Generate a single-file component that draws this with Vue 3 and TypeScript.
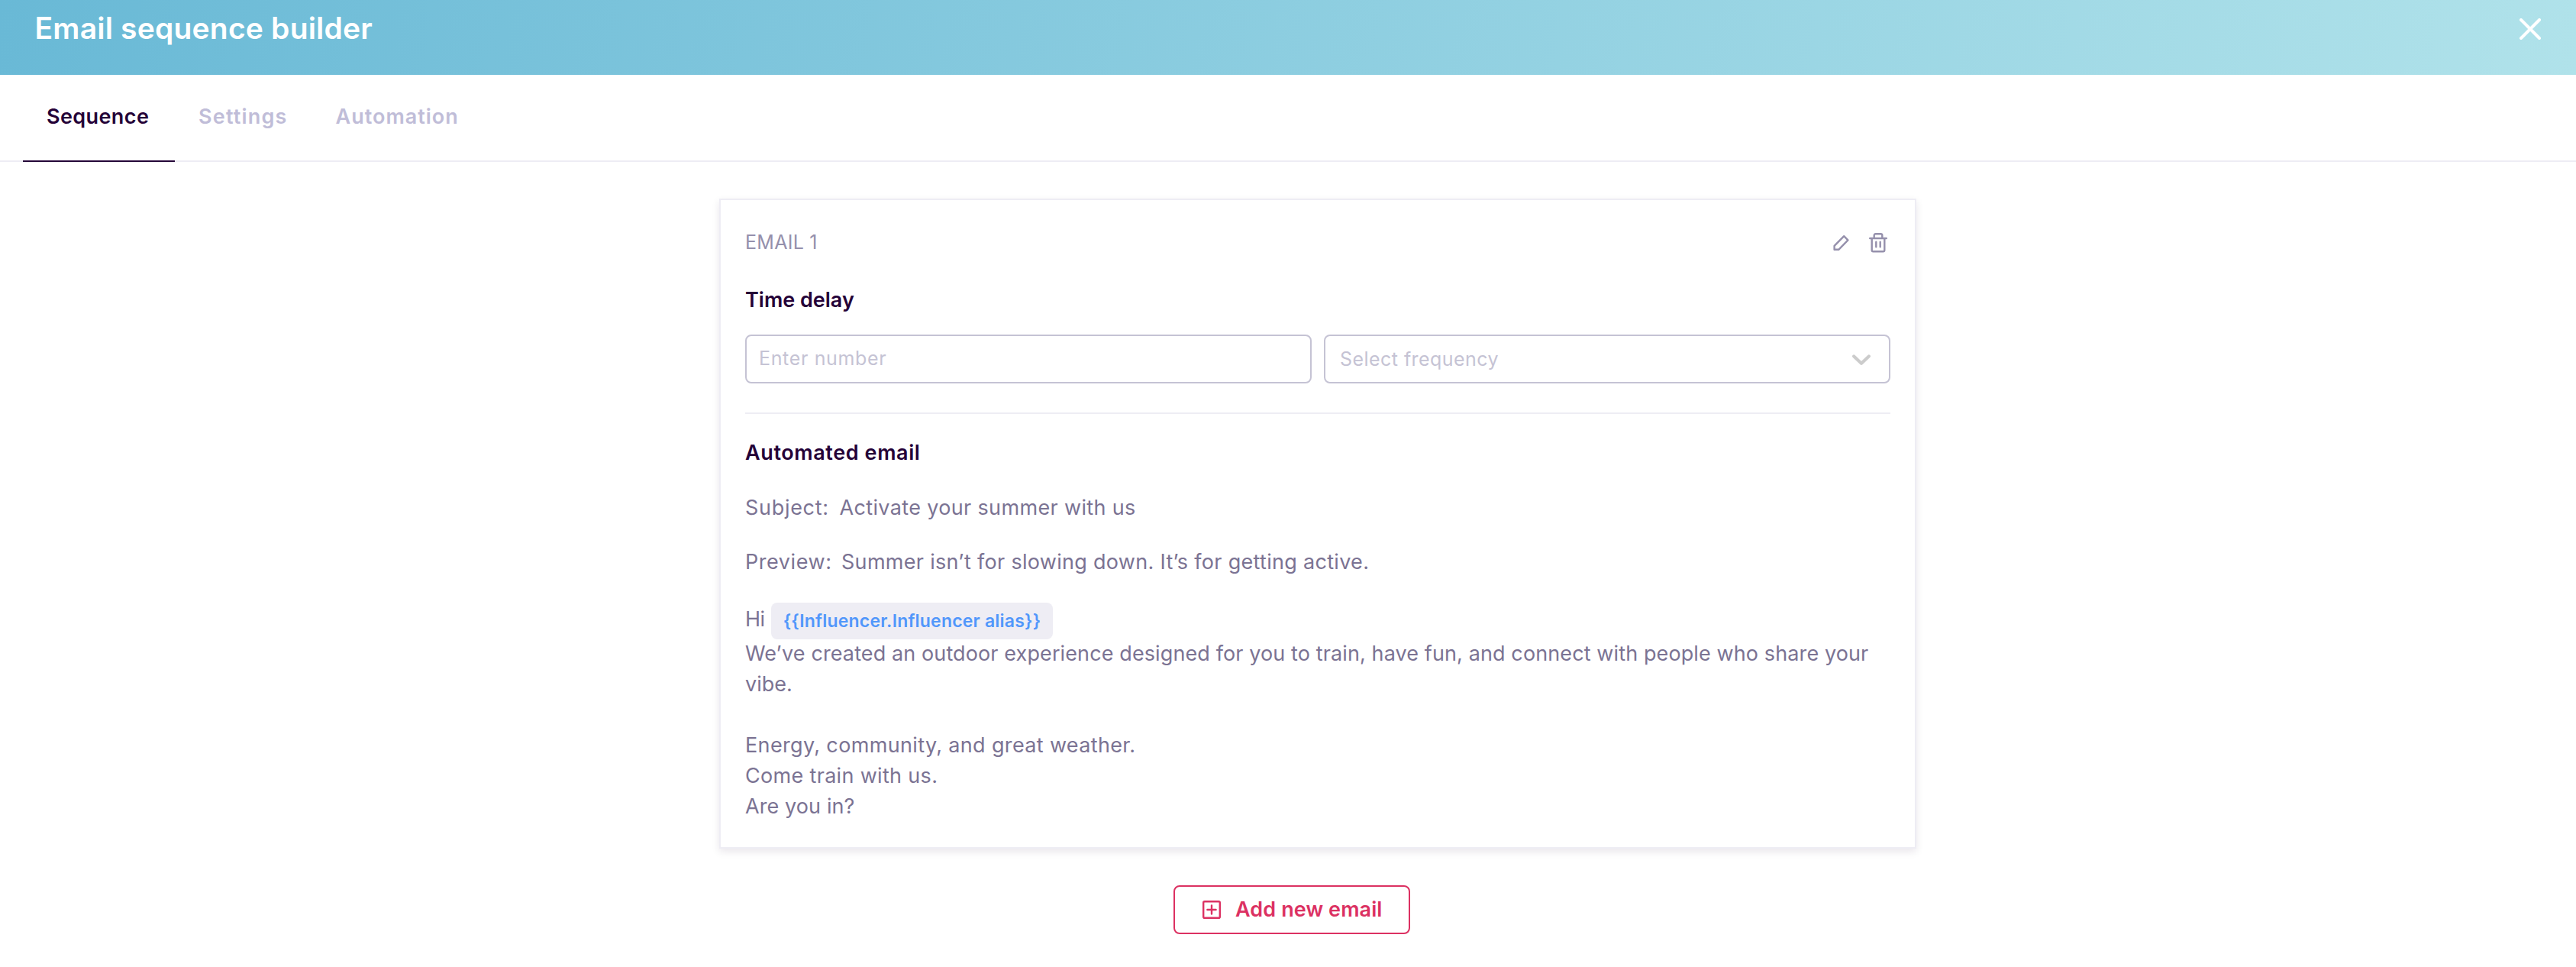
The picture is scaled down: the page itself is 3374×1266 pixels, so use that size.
<script setup lang="ts">
interface Line {
  text: string
  tracking: number
}

const tabs = [
  { key: 'sequence', label: 'Sequence', active: true },
  { key: 'settings', label: 'Settings', active: false },
  { key: 'automation', label: 'Automation', active: false },
]

const mergeTag = '{{Influencer.Influencer alias}}'

const body: Line[] = [
  { text: 'We’ve created an outdoor experience designed for you to train, have fun, and connect with people who share your', tracking: 0.11 },
  { text: 'vibe.', tracking: 0 },
  { text: '', tracking: 0 },
  { text: 'Energy, community, and great weather.', tracking: 0.35 },
  { text: 'Come train with us.', tracking: 0.32 },
  { text: 'Are you in?', tracking: 0.1 },
]
</script>

<template>
  <div class="page">
    <header class="header">
      <h1 class="title">Email sequence builder</h1>
      <svg class="close" width="28" height="28" viewBox="0 0 28 28">
        <path d="M2 2L26 26M26 2L2 26" />
      </svg>
    </header>

    <nav class="tabs">
      <a v-for="tab in tabs" :key="tab.key" class="tab" :class="[tab.key, { active: tab.active }]">{{ tab.label }}</a>
    </nav>

    <section class="card">
      <div class="head">
        <span class="name">EMAIL 1</span>
        <div class="actions">
          <svg class="pencil" width="22" height="22" viewBox="0 0 22 22">
            <path d="M14.2 2.2L19.4 7.4L7.2 19.8H1.6V14.8Z" />
          </svg>
          <svg class="trash" width="24" height="26" viewBox="0 0 24 26">
            <path d="M1.2 7H22.8M3.7 7V22.5Q3.7 24.3 5.5 24.3H18.5Q20.3 24.3 20.3 22.5V7M6.7 7V3.2Q6.7 1.3 8.6 1.3H15.4Q17.3 1.3 17.3 3.2V7" />
            <path d="M9.3 11.8V18.3M14.7 11.8V18.3" />
          </svg>
        </div>
      </div>

      <h2 class="heading delay">Time delay</h2>
      <div class="fields">
        <div class="field number">Enter number</div>
        <div class="field frequency">
          <span>Select frequency</span>
          <svg width="24" height="15" viewBox="0 0 24 15"><path d="M2.2 2.5L12 11.8L21.8 2.5" /></svg>
        </div>
      </div>

      <div class="divider"></div>

      <h2 class="heading automated">Automated email</h2>
      <div class="row subject"><span class="label">Subject:</span><span class="value">Activate your summer with us</span></div>
      <div class="row preview"><span class="label">Preview:</span><span class="value">Summer isn’t for slowing down. It’s for getting active.</span></div>

      <div class="greeting"><span class="hi">Hi</span><span class="chip">{{ mergeTag }}</span></div>
      <div v-for="(line, i) in body" :key="i" class="line" :style="{ letterSpacing: line.tracking + 'px' }">{{ line.text }}</div>
    </section>

    <button class="add">
      <svg width="24" height="24" viewBox="0 0 24 24">
        <rect x="1.2" y="1.2" width="21.6" height="21.6" rx="1.6" />
        <path d="M12 6.4V17.6M6.4 12H17.6" />
      </svg>
      <span>Add new email</span>
    </button>
  </div>
</template>

<style>
body {
  margin: 0;
  background: #fff;
}
</style>

<style scoped>
.page {
  box-sizing: border-box;
  width: 3374px;
  height: 1266px;
  overflow: hidden;
  background: #fff;
  color: #7b7393;
  font-family: Inter, "Liberation Sans", sans-serif;
  font-size: 27px;
  line-height: 40px;
}
.header {
  box-sizing: border-box;
  display: flex;
  align-items: flex-start;
  justify-content: space-between;
  height: 98px;
  padding: 13px 46px 0 45.5px;
  background: linear-gradient(100deg, #69b9d6 0%, #b0e2ea 100%);
}
.title {
  margin: 0;
  color: #fff;
  font-size: 39px;
  font-weight: 600;
  line-height: 48px;
  letter-spacing: 0.2px;
}
.close {
  margin-top: 11px;
  fill: none;
  stroke: #fff;
  stroke-width: 4;
  stroke-linecap: round;
}
.tabs {
  box-sizing: border-box;
  display: flex;
  height: 114px;
  padding-left: 30px;
  border-bottom: 2px solid #eeedf4;
}
.tab {
  box-sizing: border-box;
  height: 114px;
  padding: 35px 0 0 31px;
  border-bottom: 2px solid transparent;
  color: #c0bdd8;
  font-weight: 600;
  white-space: nowrap;
}
.sequence {
  width: 199px;
  letter-spacing: 0.4px;
}
.settings {
  width: 179.5px;
  letter-spacing: 1.2px;
}
.automation {
  letter-spacing: 1px;
}
.tab.active {
  color: #240037;
  border-bottom-color: #240037;
}
.card {
  box-sizing: border-box;
  width: 1568px;
  margin: 48px 0 0 942px;
  padding: 32px 32px 33px;
  border: 2px solid #eeedf4;
  box-shadow: 0 4px 10px rgba(36, 0, 55, 0.1);
}
.head {
  display: flex;
  justify-content: space-between;
  height: 48px;
}
.name {
  color: #9590ac;
  font-size: 25px;
  line-height: 46px;
  letter-spacing: 0.27px;
}
.actions {
  display: flex;
  align-items: center;
  gap: 25px;
  padding-right: 4px;
}
.actions svg {
  fill: none;
  stroke: #9590ac;
  stroke-width: 2.4;
  stroke-linecap: round;
  stroke-linejoin: round;
}
.heading {
  margin: 0;
  color: #240037;
  font-size: 27px;
  font-weight: 600;
  line-height: 40px;
}
.delay {
  margin-top: 31px;
  letter-spacing: 0;
}
.automated {
  margin-top: 31px;
  letter-spacing: 0.6px;
}
.fields {
  display: grid;
  grid-template-columns: 1fr 1fr;
  gap: 16px;
  margin-top: 25px;
}
.field {
  box-sizing: border-box;
  display: flex;
  align-items: center;
  justify-content: space-between;
  height: 64px;
  border: 2px solid #c5c3d4;
  border-radius: 8px;
  color: #c5c3d4;
  font-size: 25px;
}
.number {
  padding: 0 16px 2px;
  letter-spacing: 0.65px;
}
.frequency {
  padding: 0 24px 0 19px;
  letter-spacing: 0.45px;
}
.frequency svg {
  margin-top: 2px;
  fill: none;
  stroke: #ccc;
  stroke-width: 4.2;
  stroke-linecap: round;
  stroke-linejoin: round;
}
.divider {
  height: 2px;
  margin-top: 38px;
  background: #eeedf4;
}
.row {
  display: flex;
}
.subject {
  margin-top: 32px;
}
.subject .label {
  width: 123.5px;
  letter-spacing: 0.7px;
}
.subject .value {
  letter-spacing: 0.35px;
}
.preview {
  margin-top: 31px;
}
.preview .label {
  width: 126px;
  letter-spacing: 0.56px;
}
.preview .value {
  letter-spacing: 0.3px;
}
.greeting {
  display: flex;
  height: 47px;
  margin-top: 33px;
}
.hi {
  width: 34px;
  line-height: 44px;
  letter-spacing: -0.5px;
}
.chip {
  box-sizing: border-box;
  width: 369px;
  height: 48px;
  border-radius: 8px;
  background: #eeedf4;
  color: #5197fb;
  font-size: 23px;
  font-weight: 600;
  line-height: 48px;
  letter-spacing: 0.2px;
  text-align: center;
  white-space: nowrap;
}
.line {
  height: 40px;
  white-space: nowrap;
}
.add {
  box-sizing: border-box;
  display: flex;
  align-items: center;
  width: 310px;
  height: 64px;
  margin: 48px 0 0 1537px;
  padding: 0 0 0 36px;
  border: 2px solid #dc3162;
  border-radius: 8px;
  background: #fff;
  color: #dc3162;
  font-family: inherit;
  font-size: 27px;
  font-weight: 600;
  line-height: 40px;
  letter-spacing: 0.1px;
  white-space: nowrap;
}
.add svg {
  margin-right: 19px;
  fill: none;
  stroke: #dc3162;
  stroke-width: 2.4;
  stroke-linecap: round;
}
</style>
